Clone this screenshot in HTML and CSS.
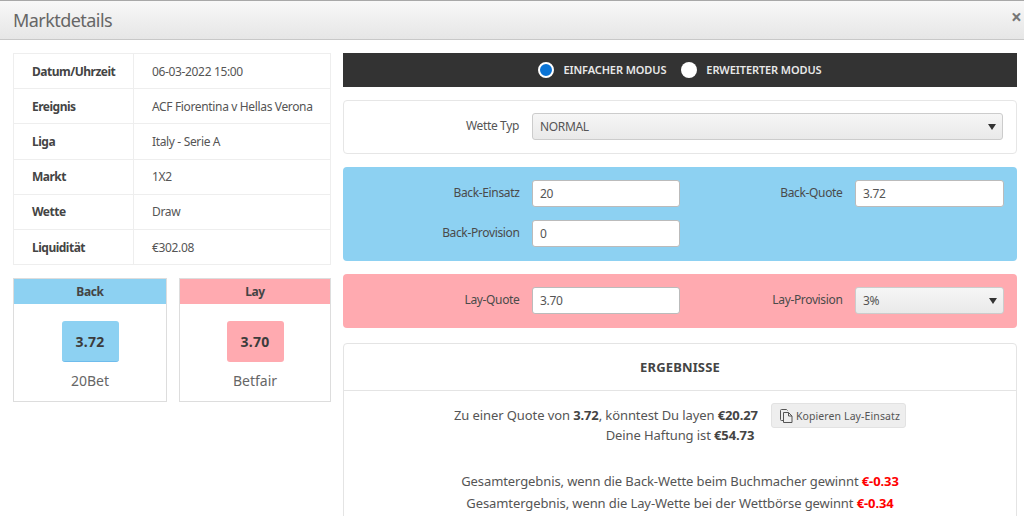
FILE: index.html
```html
<!DOCTYPE html>
<html lang="de">
<head>
<meta charset="utf-8">
<title>Marktdetails</title>
<link rel="stylesheet" href="styles.css">
</head>
<body>
<div class="modal">
  <header class="modal-header">
    <h1>Marktdetails</h1>
    <span class="close">×</span>
  </header>
  <div class="modal-body">
    <aside class="left">
      <table class="details">
        <tr><th>Datum/Uhrzeit</th><td>06-03-2022 15:00</td></tr>
        <tr><th>Ereignis</th><td>ACF Fiorentina v Hellas Verona</td></tr>
        <tr><th>Liga</th><td>Italy - Serie A</td></tr>
        <tr><th>Markt</th><td>1X2</td></tr>
        <tr><th>Wette</th><td>Draw</td></tr>
        <tr><th>Liquidität</th><td>€302.08</td></tr>
      </table>
      <div class="cards">
        <div class="card">
          <div class="card-head back">Back</div>
          <div class="odds back">3.72</div>
          <div class="bookie">20Bet</div>
        </div>
        <div class="card">
          <div class="card-head lay">Lay</div>
          <div class="odds lay">3.70</div>
          <div class="bookie">Betfair</div>
        </div>
      </div>
    </aside>
    <main class="right">
      <div class="modes">
        <span class="radio checked"></span><span class="mode-label">EINFACHER MODUS</span>
        <span class="radio"></span><span class="mode-label last">ERWEITERTER MODUS</span>
      </div>
      <section class="panel plain">
        <div class="wide-row">
          <label>Wette Typ</label>
          <div class="select">NORMAL<span class="caret"></span></div>
        </div>
      </section>
      <section class="panel blue">
        <div class="form-grid">
          <label>Back-Einsatz</label><div class="input">20</div>
          <label>Back-Quote</label><div class="input">3.72</div>
          <label>Back-Provision</label><div class="input">0</div>
        </div>
      </section>
      <section class="panel pink">
        <div class="form-grid">
          <label>Lay-Quote</label><div class="input">3.70</div>
          <label>Lay-Provision</label><div class="select">3%<span class="caret"></span></div>
        </div>
      </section>
      <section class="results">
        <h2>ERGEBNISSE</h2>
        <p class="summary">Zu einer Quote von <b>3.72</b>, könntest Du layen <b>€20.27</b><button class="copy" type="button"><svg width="13" height="14" viewBox="0 0 13 14" fill="none" stroke="#555" stroke-width="1"><path d="M3.500 11.500h-2a1 1 0 0 1-1-1v-9a1 1 0 0 1 1-1h5l1 1"/><path d="M3.500 3.500h5l3.500 3.500v6.500h-8.500z"/><path d="M8.500 3.500v3.500h3.500"/></svg>Kopieren Lay-Einsatz</button><br>Deine Haftung ist <b>€54.73</b></p>
        <p class="outcome">Gesamtergebnis, wenn die Back-Wette beim Buchmacher gewinnt <b>€-0.33</b><br>Gesamtergebnis, wenn die Lay-Wette bei der Wettbörse gewinnt <b>€-0.34</b></p>
      </section>
    </main>
  </div>
</div>
</body>
</html>
```
FILE: styles.css
```css
* { box-sizing: border-box; }
html, body { margin: 0; height: 516px; overflow: hidden; background: #fff; }
body { font-family: "Noto Sans", "Open Sans", sans-serif; color: #444; font-size: 12px; letter-spacing: -0.35px; }

.modal-header {
  height: 40px;
  border-top: 1px solid #a8a8a8;
  border-bottom: 1px solid #c8c8c8;
  background: linear-gradient(#f8f8f8, #e6e6e6);
  display: flex;
  align-items: center;
  justify-content: space-between;
  padding: 0 0 1px 13px;
}
.modal-header h1 { margin: 0; font-size: 18px; font-weight: 400; color: #666; letter-spacing: -0.55px; }
.close { font-size: 19px; font-weight: 700; color: #777; line-height: 1; margin: -5px 0 0 0; width: 13px; }

.modal-body { display: flex; padding: 13px 7px 0 13px; gap: 12px; }
.left { width: 318px; flex: none; }
.right { flex: 1; }

.details { width: 100%; border-collapse: collapse; border: 1px solid #eee; }
.details tr { height: 35.2px; }
.details th, .details td { border: 1px solid #eee; padding: 0 0 0 18px; text-align: left; }
.details th { width: 120px; font-weight: 700; color: #444; letter-spacing: -0.5px; }
.details td { color: #555; }

.cards { display: flex; gap: 12px; margin-top: 13px; }
.card { flex: 1; height: 124px; border: 1px solid #ddd; text-align: center; }
.card:first-child { flex: 0 0 154px; }
.card-head { height: 25px; line-height: 25px; font-weight: 700; }
.back { background: #8dd1f2; }
.lay { background: #ffaab0; }
.odds {
  width: 57px; height: 41px; margin: 17px auto 0; border-radius: 3px;
  font-size: 14px; font-weight: 700; line-height: 41px; color: #3c3c3c; letter-spacing: 0.2px;
}
.odds.back { border-bottom: 1px solid #6fbcec; }
.bookie { margin-top: 9px; font-size: 14px; color: #666; letter-spacing: 0; }

.modes {
  height: 34px; background: #333; color: #e8e8e8; padding-bottom: 1px;
  display: flex; align-items: center; justify-content: center;
  font-size: 11px; font-weight: 600; letter-spacing: -0.1px;
}
.radio { width: 16px; height: 16px; border-radius: 50%; background: #fff; flex: none; }
.radio.checked { background: #0a74d6; border: 2.500px solid #fff; }
.mode-label { margin: 0 15px 0 9px; }
.mode-label.last { margin-right: 0; }

.panel { border-radius: 4px; margin-top: 13px; }
.plain { height: 54px; border: 1px solid #e6e6e6; padding-top: 12px; }
.blue { height: 94px; background: #8dd1f2; padding-top: 13px; }
.pink { height: 54px; background: #ffaab0; padding-top: 13px; }

label { text-align: right; color: #555; align-self: center; padding-bottom: 3px; }
.blue label, .pink label { color: #4a4a4a; }

.wide-row { display: grid; grid-template-columns: 175px 1fr; column-gap: 13px; padding-right: 13px; }
.form-grid { display: grid; grid-template-columns: 176.500px 148px 150px 148.500px; column-gap: 12.500px; row-gap: 13px; }

.input, .select {
  height: 27px; border: 1px solid #bbb; border-radius: 3px; padding: 0 7px;
  display: flex; align-items: center; color: #555; background: #fff;
}
.select { background: linear-gradient(#f6f6f6, #e9e9e9); justify-content: space-between; border-color: #ccc; }
.caret { width: 0; height: 0; border-left: 4px solid transparent; border-right: 4px solid transparent; border-top: 6px solid #333; margin-right: -1px; }

.results { margin-top: 15px; height: 220px; border: 1px solid #e4e4e4; border-radius: 4px; }
.results h2 { margin: 0; height: 47px; line-height: 47px; border-bottom: 1px solid #e4e4e4; text-align: center; font-size: 13px; font-weight: 700; color: #444; letter-spacing: 0.15px; }
.results p { margin: 0; font-size: 13px; color: #555; text-align: center; letter-spacing: -0.1px; }
.results b { color: #444; }
.results .summary { padding-top: 14px; line-height: 20px; }
.copy {
  display: inline-flex; align-items: center; gap: 3px; vertical-align: top;
  height: 25px; margin: -2px 0 -5px 13px; padding: 0 5px 0 8px;
  background: #eee; border: 1px solid #e2e2e2; border-radius: 3px;
  font: inherit; font-size: 10.500px; color: #555; letter-spacing: 0.1px;
}
.results .outcome { margin-top: 25px; line-height: 22px; }
.results .outcome b { color: #f00; }
```
